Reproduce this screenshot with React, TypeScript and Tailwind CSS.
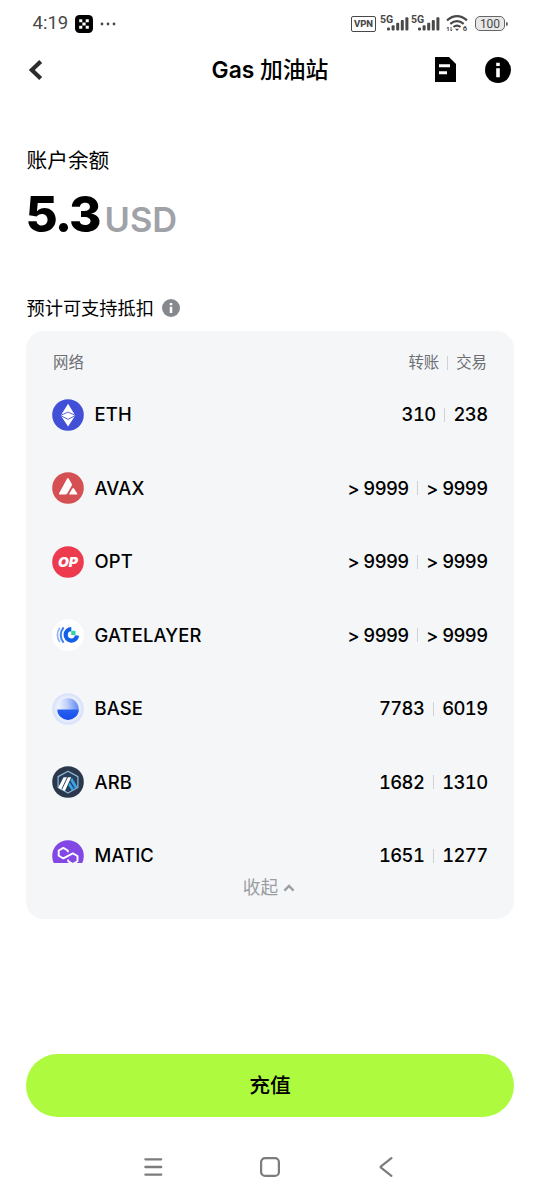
import { ReactNode } from "react";

const EthIcon = () => (
    <svg viewBox="0 0 32 32" className="size-8">
        <circle cx="16" cy="16" r="15.8" fill="#4250d8" />
        <path d="M16.1 4.7 23.2 16.6 16.1 27.4 8.8 16.6z" fill="#fff" />
        <path d="M8.4 16.5 16.1 13.1 23.6 16.5 16.1 20.3z" fill="#fff" stroke="#4250d8" strokeWidth="0.9" />
    </svg>
);

const AvaxIcon = () => (
    <svg viewBox="0 0 32 32" className="size-8">
        <circle cx="16" cy="16" r="15.8" fill="#d55053" />
        <path d="M15 6.8q.9-1.4 1.8 0l2.9 4.9q.5 1 0 2l-4.5 7.8q-.6 1.1-1.8 1.1H7.9q-1.6 0-.8-1.4z" fill="#fff" />
        <path d="M20.4 16.6q.8-1.3 1.6 0l3.2 4.8q.7 1.2-.7 1.2h-6.4q-1.4 0-.7-1.2z" fill="#fff" />
    </svg>
);

const OptIcon = () => (
    <svg viewBox="0 0 32 32" className="size-8">
        <circle cx="16" cy="16" r="15.8" fill="#ee3a4f" />
        <text x="6" y="20.8" fontSize="13.6" fontWeight="900" fontStyle="italic" fill="#fff" textLength="20" lengthAdjust="spacingAndGlyphs" fontFamily="Inter, sans-serif">OP</text>
    </svg>
);

const GateLayerIcon = () => (
    <svg viewBox="0 0 32 32" className="size-8" fill="none">
        <circle cx="16" cy="16" r="15.8" fill="#fff" />
        <path d="M7.8 8.8Q3 16 7.8 23" stroke="#8fb3f5" strokeWidth="1.6" />
        <path d="M11.6 8.3Q5.8 16 11.6 23.7" stroke="#3f7df0" strokeWidth="2" />
        <path d="M19.3 10.2a5.7 5.7 0 1 0 5.7 6.4" stroke="#135fe6" strokeWidth="4.3" />
        <path d="M19.2 11.8h4.3v4.2h-4.3z" fill="#2bd9a0" />
    </svg>
);

const BaseIcon = () => (
    <svg viewBox="0 0 32 32" className="size-8">
        <defs>
            <linearGradient id="base-top" x1="0" y1="0.5" x2="1" y2="0.4">
                <stop offset="0" stopColor="#f4f7ff" />
                <stop offset="0.45" stopColor="#c3d2fb" />
                <stop offset="1" stopColor="#5e89f3" />
            </linearGradient>
            <linearGradient id="base-bottom" x1="0" y1="0" x2="0" y2="1">
                <stop offset="0" stopColor="#2862f0" />
                <stop offset="1" stopColor="#174be8" />
            </linearGradient>
        </defs>
        <circle cx="16" cy="16" r="15.8" fill="#dbe3fb" />
        <circle cx="16" cy="16" r="13.4" fill="#e6ecfd" />
        <circle cx="16" cy="16" r="10.7" fill="url(#base-top)" />
        <path d="M5.3 16.5h21.4a10.7 10.4 0 0 1-21.4 0z" fill="url(#base-bottom)" />
    </svg>
);

const ArbIcon = () => (
    <svg viewBox="0 0 32 32" className="size-8">
        <circle cx="16" cy="16" r="15.8" fill="#2b384b" />
        <path d="M16 5.2 25.9 10.6v10.8L16 26.9 6.1 21.4V10.6z" fill="#263f5a" stroke="#91b8d9" strokeWidth="1.2" strokeLinejoin="round" />
        <path d="M11.6 11.3h3.4L9.2 23.4 6.3 21.6z" fill="#fff" />
        <path d="M16 11.3h3.2L12.9 25 10.1 23.6z" fill="#fff" />
        <path d="M20.1 11.8 25.6 21.2 23.2 22.7 18.4 14.8z" fill="#3ba4e8" />
        <path d="M17.7 16.4 22.3 23.5 20 24.8 16.3 19.3z" fill="#3ba4e8" />
    </svg>
);

const MaticIcon = () => (
    <svg viewBox="0 0 32 32" className="size-8">
        <circle cx="16" cy="16" r="15.8" fill="#8247e5" />
        <path d="M15.8 12.2V10.5L11.3 7.9 6.7 10.5v5.2l4.6 2.7L20.8 13.4l4.7 2.6v5.3l-4.7 2.7-4.6-2.7v-1.8" fill="none" stroke="#fff" strokeWidth="1.9" strokeLinejoin="round" />
    </svg>
);

const InfoIcon = ({ className }: { className: string }) => (
    <svg viewBox="0 0 26 26" className={className}>
        <circle cx="13" cy="13" r="13" fill="currentColor" />
        <path d="M11.2 5.8h3.6v3.3h-3.6zM11.2 11.3h3.6v8.9h-3.6z" fill="#fff" />
    </svg>
);

const SignalIcon = () => (
    <div className="relative w-[29px] h-4">
        <span className="absolute left-0 -top-px text-[10.5px] leading-none font-bold">5G</span>
        <svg viewBox="0 0 22 14" className="absolute right-0 bottom-px w-[22px] h-3.5" fill="currentColor">
            <rect x="0" y="10.5" width="3" height="3" rx="1" />
            <rect x="4.6" y="8.3" width="3" height="5.2" rx="1" />
            <rect x="9.2" y="5.7" width="3" height="7.8" rx="1" />
            <rect x="13.8" y="3" width="3" height="10.5" rx="1" />
            <rect x="18.4" y="0.3" width="3" height="13.2" rx="1" />
        </svg>
    </div>
);

const StatusBar = () => (
    <div className="h-[47px] pl-[32.5px] pr-8 flex items-center justify-between text-[#48484a] font-['Roboto','Liberation_Sans',sans-serif]">
        <div className="flex items-center">
            <p className="w-[42.5px] text-[18.5px] leading-none">4:19</p>
            <svg viewBox="0 0 18 18" className="size-[18px]">
                <rect width="18" height="18" rx="4.5" fill="#000" />
                <path d="M4.2 4.2h3.1v3.1H4.2zM10.7 4.2h3.1v3.1h-3.1zM7.4 7.4h3.2v3.2H7.4zM4.2 10.7h3.1v3.1H4.2zM10.7 10.7h3.1v3.1h-3.1z" fill="#fff" />
            </svg>
            <svg viewBox="0 0 16 4" className="ml-[7px] w-4 h-1" fill="currentColor">
                <circle cx="2" cy="2" r="1.4" />
                <circle cx="8" cy="2" r="1.4" />
                <circle cx="14" cy="2" r="1.4" />
            </svg>
        </div>
        <div className="flex items-center">
            <p className="w-[25px] h-4 mr-1 pt-px border-[1.5px] border-current rounded-xs text-[9.5px] leading-none font-extrabold flex items-center justify-center">VPN</p>
            <SignalIcon />
            <div className="w-0.5" />
            <SignalIcon />
            <svg viewBox="0 0 22 17" className="ml-1.5 w-[22px] h-[17px]" fill="none" stroke="currentColor">
                <path d="M1 5.3Q11-2.9 21 5.3" strokeWidth="2.2" />
                <path d="M4.3 8.8Q11 3.4 17.7 8.8" strokeWidth="2.2" />
                <path d="M7.4 12Q11 9.2 14.6 12" strokeWidth="2.2" />
                <path d="M9 13.7h4L11 16z" fill="currentColor" stroke="none" />
                <path d="M2.2 16v-4L.9 13.6M5 12v4l1.2-1.5" strokeWidth="0.9" />
                <text x="16.8" y="16" fontSize="7.5" fontWeight="700" fill="currentColor" stroke="none">6</text>
            </svg>
            <p className="ml-[7px] w-[30px] h-[15px] border-[1.5px] border-[#666] bg-[#e8e8e8] rounded-[5px] text-[12px] leading-none flex items-center justify-center">100</p>
            <div className="ml-px w-0.5 h-1 rounded-r bg-[#666]" />
        </div>
    </div>
);

const Divider = () => <span className="w-px h-3.5 bg-[#cfd1d4]" />;

type Network = {
    name: string;
    icon: ReactNode;
    transfer: string;
    trade: string;
};

const networks: Network[] = [
    { name: "ETH", icon: <EthIcon />, transfer: "310", trade: "238" },
    { name: "AVAX", icon: <AvaxIcon />, transfer: "> 9999", trade: "> 9999" },
    { name: "OPT", icon: <OptIcon />, transfer: "> 9999", trade: "> 9999" },
    { name: "GATELAYER", icon: <GateLayerIcon />, transfer: "> 9999", trade: "> 9999" },
    { name: "BASE", icon: <BaseIcon />, transfer: "7783", trade: "6019" },
    { name: "ARB", icon: <ArbIcon />, transfer: "1682", trade: "1310" },
    { name: "MATIC", icon: <MaticIcon />, transfer: "1651", trade: "1277" },
];

const App = () => {
    return (
        <div className="w-[540px] h-[1200px] overflow-hidden bg-white text-black flex flex-col font-['Inter','Noto_Sans_CJK_SC',sans-serif]">
            <StatusBar />

            <header className="h-[46px] px-[26px] grid grid-cols-[1fr_auto_1fr] items-center">
                <svg viewBox="0 0 20 22" className="w-5 h-[22px]" fill="none" stroke="#2c2c2e" strokeWidth="4.2">
                    <path d="M14.7 2.4 5.8 11l8.9 8.6" />
                </svg>
                <h1 className="pt-px text-[22.8px] leading-none font-semibold">
                    Gas <span className="font-medium">加油站</span>
                </h1>
                <div className="flex items-center justify-end gap-[29px] pr-[3px] pb-px">
                    <svg viewBox="0 0 21 25" className="w-[21px] h-[25px]">
                        <path d="M0 0h14l7 7v18H0z" fill="#000" />
                        <path d="M4 7.2h11v3H4zM4 14.3h8v3H4z" fill="#fff" />
                    </svg>
                    <InfoIcon className="size-[26px]" />
                </div>
            </header>

            <section className="px-[26.5px]">
                <p className="mt-14 h-6 text-[20.7px] leading-6">账户余额</p>
                <div className="-ml-px mt-[11px] h-[61px] flex items-baseline gap-[5px]">
                    <span className="text-[49.5px] leading-[61px] font-extrabold tracking-[-2px]">5.3</span>
                    <span className="text-[34.4px] leading-none font-semibold text-[#9fa2a6]">USD</span>
                </div>
                <div className="mt-[51px] h-6 flex items-center gap-2">
                    <p className="text-[18.2px] leading-6">预计可支持抵扣</p>
                    <InfoIcon className="size-[18px] text-[#85888c]" />
                </div>
            </section>

            <section className="mt-[11px] mx-[26px] h-[588px] rounded-[18px] bg-[#f4f6f8] px-[26px] flex flex-col">
                <div className="h-[47px] pt-[17px] pr-px flex items-center justify-between text-[15.4px] leading-none text-[#6c6e72]">
                    <p className="pl-px">网络</p>
                    <div className="flex items-center gap-2">
                        <span>转账</span>
                        <Divider />
                        <span>交易</span>
                    </div>
                </div>
                <div className="h-[485px] overflow-hidden">
                    {networks.map((network) => (
                        <div key={network.name} className="h-[73px] mb-[0.5px] flex items-center justify-between text-[18.4px] leading-none font-medium">
                            <div className="flex items-center gap-[10.5px]">
                                {network.icon}
                                <p className="tracking-[0.15px]">{network.name}</p>
                            </div>
                            <div className="flex items-center gap-[8.5px] pr-[0.5px] tabular-nums">
                                <span className="tracking-[-0.6px]">{network.transfer}</span>
                                <Divider />
                                <span className="tracking-[-0.6px]">{network.trade}</span>
                            </div>
                        </div>
                    ))}
                </div>
                <button className="h-12 pt-px pr-0.5 flex items-center justify-center gap-[5px] text-[17.7px] leading-none text-[#9b9ea2]">
                    收起
                    <svg viewBox="0 0 12 8" className="w-3 h-2" fill="none" stroke="currentColor" strokeWidth="2.4">
                        <path d="M1.4 6.6 6 2l4.6 4.6" />
                    </svg>
                </button>
            </section>

            <button className="mt-[135px] mx-[26px] h-[63px] pt-px rounded-full bg-[#adfa3e] text-[20.8px] leading-none font-medium">充值</button>

            <nav className="mt-[38px] h-6 pl-[143px] pr-[147px] grid grid-cols-[117px_1fr_auto] items-center text-[#7c7c7c]">
                <svg viewBox="0 0 20 20" className="size-5" fill="none" stroke="currentColor" strokeWidth="2.3" strokeLinecap="round">
                    <path d="M2.4 2.3h15.8M2.4 10h15.8M2.4 17.7h15.8" />
                </svg>
                <svg viewBox="0 0 20 20" className="size-5" fill="none" stroke="currentColor" strokeWidth="2.2">
                    <rect x="1.1" y="1.1" width="17.8" height="17.8" rx="4" />
                </svg>
                <svg viewBox="0 0 14 20" className="w-3.5 h-5" fill="none" stroke="currentColor" strokeWidth="2.2" strokeLinecap="round" strokeLinejoin="round">
                    <path d="M12.4 1.2 2 9.4q-.8.6 0 1.2l10.4 8.2" />
                </svg>
            </nav>
        </div>
    );
};

export default App;
